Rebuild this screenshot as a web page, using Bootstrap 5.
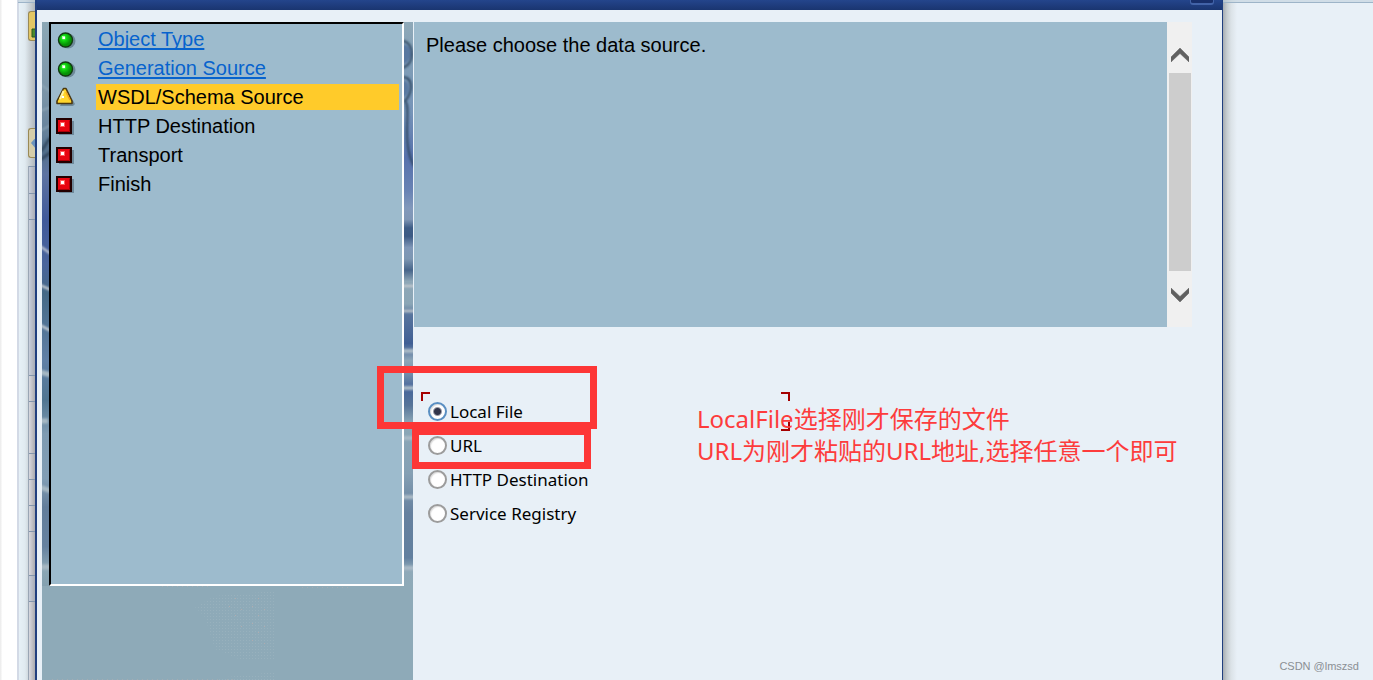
<!DOCTYPE html>
<html lang="en">
<head>
<meta charset="utf-8">
<meta name="viewport" content="width=device-width, initial-scale=1">
<title>Service wizard</title>
<link href="https://cdn.jsdelivr.net/npm/bootstrap@5.3.0/dist/css/bootstrap.min.css" rel="stylesheet">
<style>
  :root { --page: #e8f0f7; --panel: #9dbbcd; --navy: #203f7f; --mark: #fd3636; }
  body { background: var(--page); color: #000; font-family: "Liberation Sans", Arial, sans-serif; }

  /* window behind the dialog */
  .behind-left { width: 35px; background: linear-gradient(90deg, #eee 0 1px, #fff 2px 17px, #d3dae6 17px 19px, #e7f1f7 19px, #e0eaf0 25px, #cdd5da 29px, #b0b6ba 35px); }
  .tool-edge { width: 7px; }
  .tool-btn { width: 7px; height: 30px; background: #e3c765; border: 1px solid #9a8a55; border-right: 0; border-radius: 3px 0 0 3px; padding: 0; display: block; overflow: hidden; }
  .tool-btn svg { display: block; }
  .tool-btn.pale { background: #d5cdaa; }
  .grid-edge { border-left: 1px solid #9aa6b5; background: linear-gradient(90deg, #c8cfdc, #a9adb5); }
  .grid-edge > div { border-top: 1px solid #8496ac; }
  .grid-edge > .cell-light { background: linear-gradient(90deg, #d8d9e0, #aaabaf); }
  .behind-right { width: 150px; background: linear-gradient(90deg, #a7adb2, #c6cdd1 4px, #dbe2e7 8px, #e8f0f700 14px); }
  .behind-bar { height: 3px; background: #bfd0dc99; border-bottom: 1px solid #9db4c8; }
  .watermark { font-size: 11px; line-height: 16px; color: #8a8f94; padding: 0 14px 6px 0; }

  /* dialog */
  .dialog { border: solid var(--navy); border-width: 0 1px 0 2px; background: var(--page); min-width: 0; }
  .titlebar { height: 10px; background: linear-gradient(#24458c, #1a3570); padding-right: 8px; }
  .title-btn { width: 24px; height: 5px; background: #182f6b; border: solid #4263a8; border-width: 0 1px 2px; border-radius: 0 0 3px 3px; padding: 0; }
  .wizard { margin-top: 12px; margin-left: 5px; }
  .roadmap { width: 371px; background: #8eaab8; flex: none; }
  .strip-l { width: 7px; height: 564px; }
  .strip-r { width: 9px; height: 564px; }
  .steps { background: var(--panel); border: 2px solid; border-color: #000 #fff #fff #000; padding: 2px 3px 0 5px; min-height: 564px; font-size: 20px; line-height: 26px; }
  .steps li { margin-bottom: 3px; }
  .steps svg { width: 20px; height: 20px; margin: 3px 20px 0 0; flex: none; }
  .steps a { color: #0763cd; text-decoration: underline; text-decoration-thickness: 2px; text-underline-offset: 2px; text-decoration-skip-ink: none; }
  .step-name { padding-left: 2px; }
  .active-step { background: #ffcb2a; }

  /* right side */
  .message { min-height: 305px; background: var(--panel); font-size: 20px; line-height: 26px; padding: 10px 12px; margin-left: 1px; }
  .scroller { width: 25px; background: #f0f0f0; margin-right: 30px; }
  .scroller button { border: 0; background: none; padding: 0; height: 50px; display: flex; justify-content: center; align-items: center; width: 25px; }
  .scroller button + .thumb { margin: 1px 1px 0 2px; }
  .thumb { height: 198px; background: #cdcdcd; }
  .scroller button svg { width: 18px; height: 14px; }
  .scroller .up { padding-top: 16px; }
  .scroller .down { padding-bottom: 2px; }
  .choices { margin-top: 67px; padding-left: 14px; font-family: "Noto Sans", "Open Sans", sans-serif; font-size: 17px; line-height: 34px; }
  .choice { height: 34px; padding-top: 1px; }
  .choice input { appearance: none; width: 19px; height: 19px; margin: 0 3px 0 1px; border: 2px solid #9c9c9c; border-radius: 50%; background: #fff; box-shadow: inset 1px 1px 1px #ddd; flex: none; }
  .choice input:checked { border-color: #5a8fc2; background: radial-gradient(circle, #31344a 0 3px, #fff 5px); }

  /* marks drawn over the form */
  .group-frame { left: 8px; top: -2px; width: 369px; height: 39px; }
  .corner { width: 9px; height: 9px; border: 0 solid #a50000; }
  .corner-tl { border-width: 2px 0 0 2px; }
  .corner-tr { border-width: 2px 2px 0 0; }
  .corner-br { border-width: 0 2px 2px 0; }
  .mark-box { border: 7px solid var(--mark); pointer-events: none; }
  .mark-file { left: -36px; top: -28px; width: 220px; height: 63px; }
  .mark-url { left: -1px; top: 34px; width: 179px; height: 41px; }
  .note { left: 284px; top: 9px; color: #fd3c3c; font-family: "Noto Sans", "Noto Sans CJK SC", sans-serif; font-size: 24px; line-height: 32px; white-space: nowrap; }
</style>
</head>
<body>
<div class="d-flex min-vh-100">

  <aside class="behind-left d-flex flex-column align-items-end flex-shrink-0">
    <div class="behind-bar w-50"></div>
    <button class="tool-btn mt-2" type="button" aria-label="Save"><svg width="7" height="30"><path d="M3 17h4v8H3z" fill="#4c8a2c"/><path d="M3 17h4M3 17v8h4" stroke="#2d5a1c" fill="none"/></svg></button>
    <div style="height:87px"></div>
    <button class="tool-btn pale" type="button" aria-label="Back"><svg width="7" height="30"><path d="M7 8L2 14l5 6z" fill="#6c94bd"/></svg></button>
    <div class="grid-edge tool-edge flex-grow-1 mt-2">
      <div style="height:27px"></div>
      <div style="height:26px"></div>
      <div style="height:156px"></div>
      <div class="cell-light" style="height:26px"></div>
      <div class="cell-light" style="height:52px"></div>
      <div class="cell-light" style="height:26px"></div>
      <div class="cell-light" style="height:26px"></div>
      <div class="cell-light" style="height:26px"></div>
      <div class="cell-light" style="height:44px"></div>
      <div style="height:26px"></div>
      <div class="cell-light" style="height:79px"></div>
    </div>
  </aside>

  <main class="dialog flex-grow-1 d-flex flex-column">
    <header class="titlebar d-flex justify-content-end align-items-start">
      <button class="title-btn" type="button" aria-label="Close"></button>
    </header>
    <div class="wizard d-flex flex-grow-1">

      <nav class="roadmap" aria-label="Wizard steps">
        <div class="d-flex">
          <svg class="strip-l flex-shrink-0" viewBox="0 0 7 564" preserveAspectRatio="none" aria-hidden="true">
            <defs><linearGradient id="sl" x1="0" y1="0" x2="0" y2="1">
              <stop offset="0" stop-color="#8ca8b6"/><stop offset=".14" stop-color="#7892a6"/><stop offset=".2" stop-color="#64809a"/><stop offset=".23" stop-color="#54708c"/><stop offset=".27" stop-color="#5e74a2"/><stop offset=".35" stop-color="#405a9a"/><stop offset=".43" stop-color="#4a659c"/><stop offset=".48" stop-color="#456986"/><stop offset=".6" stop-color="#6080a6"/><stop offset=".67" stop-color="#507591"/><stop offset=".73" stop-color="#7e9bb2"/><stop offset=".81" stop-color="#819db4"/><stop offset=".86" stop-color="#627d9a"/><stop offset=".93" stop-color="#6682a0"/><stop offset=".97" stop-color="#8ba7b5"/><stop offset="1" stop-color="#84a1b0"/>
            </linearGradient>
            <filter id="soft" filterUnits="userSpaceOnUse" x="-4" y="0" width="18" height="564"><feGaussianBlur stdDeviation="1"/></filter></defs>
            <path fill="url(#sl)" d="M0 0h7v564H0z"/>
            <g fill="none" filter="url(#soft)">
              <path d="M-2 129C3 127 4 119 9 116M-2 138l11-8" stroke="#344b62" stroke-width="3"/>
              <path d="M-2 62l11 8M-2 89l11-4M-2 109l11-6" stroke="#a5b9c4"/>
              <path d="M-2 224l11 8M-2 263l11 5M-2 303l11 6" stroke="#d3d7da" stroke-width="2"/>
              <path d="M-2 350l11 3M-2 399H6M-2 465l11 4M-2 545H9" stroke="#a6b8c3" stroke-width="5"/>
            </g>
          </svg>
          <ul class="steps list-unstyled mb-0 flex-grow-1">
            <li class="d-flex">
              <svg viewBox="0 0 20 20" aria-hidden="true"><defs><radialGradient id="gr" cx=".38" cy=".35"><stop offset="0" stop-color="#8aff7a"/><stop offset=".4" stop-color="#12d812"/><stop offset="1" stop-color="#079007"/></radialGradient></defs><circle cx="12" cy="12" r="7.500" fill="#6e899a"/><circle cx="9.500" cy="11" r="7" fill="url(#gr)" stroke="#123a12" stroke-width="1.400"/><path d="M6 7h3v3H6z" fill="#b5ffad"/><path d="M7 8h2v2H7z" fill="#fff"/></svg>
              <span class="step-name flex-grow-1"><a href="#object">Object Type</a></span>
            </li>
            <li class="d-flex">
              <svg viewBox="0 0 20 20" aria-hidden="true"><circle cx="12" cy="12" r="7.500" fill="#6e899a"/><circle cx="9.500" cy="11" r="7" fill="url(#gr)" stroke="#123a12" stroke-width="1.400"/><path d="M6 7h3v3H6z" fill="#b5ffad"/><path d="M7 8h2v2H7z" fill="#fff"/></svg>
              <span class="step-name flex-grow-1"><a href="#generation">Generation Source</a></span>
            </li>
            <li class="d-flex" aria-current="step">
              <svg viewBox="0 0 20 20" aria-hidden="true"><path d="M11 3l8 14-2 2H4z" fill="#6e899a"/><path d="M7.500 1.500h2.500L16 14v2.500H1V14z" fill="#ffd52c" stroke="#4b3810" stroke-width="1.600" stroke-linejoin="round"/><path d="M7.500 4L4 12" stroke="#fff3a0" stroke-width="2"/><path d="M10 5l4 8" stroke="#f3a51c" stroke-width="1.500"/><path d="M6 9h2v2H6z" fill="#fff"/></svg>
              <span class="step-name active-step flex-grow-1">WSDL/Schema Source</span>
            </li>
            <li class="d-flex">
              <svg viewBox="0 0 20 20" aria-hidden="true"><path d="M3 5h15v14H3z" fill="#6e899a"/><path d="M1 3h14v14H1z" fill="#e80410" stroke="#200" stroke-width="2"/><path d="M13.500 4.500v11H2.500" stroke="#a80008" fill="none"/><path d="M4 6h5v5H4z" fill="#ff5a5a"/><path d="M5 7h3v3H5z" fill="#fff"/></svg>
              <span class="step-name flex-grow-1">HTTP Destination</span>
            </li>
            <li class="d-flex">
              <svg viewBox="0 0 20 20" aria-hidden="true"><path d="M3 5h15v14H3z" fill="#6e899a"/><path d="M1 3h14v14H1z" fill="#e80410" stroke="#200" stroke-width="2"/><path d="M13.500 4.500v11H2.500" stroke="#a80008" fill="none"/><path d="M4 6h5v5H4z" fill="#ff5a5a"/><path d="M5 7h3v3H5z" fill="#fff"/></svg>
              <span class="step-name flex-grow-1">Transport</span>
            </li>
            <li class="d-flex">
              <svg viewBox="0 0 20 20" aria-hidden="true"><path d="M3 5h15v14H3z" fill="#6e899a"/><path d="M1 3h14v14H1z" fill="#e80410" stroke="#200" stroke-width="2"/><path d="M13.500 4.500v11H2.500" stroke="#a80008" fill="none"/><path d="M4 6h5v5H4z" fill="#ff5a5a"/><path d="M5 7h3v3H5z" fill="#fff"/></svg>
              <span class="step-name flex-grow-1">Finish</span>
            </li>
          </ul>
          <svg class="strip-r flex-shrink-0" viewBox="0 0 9 564" preserveAspectRatio="none" aria-hidden="true">
            <defs><linearGradient id="sr" x1="0" y1="0" x2="0" y2="1">
              <stop offset="0" stop-color="#8fa9b8"/><stop offset=".1" stop-color="#7c9ab6"/><stop offset=".16" stop-color="#7694b8"/><stop offset=".24" stop-color="#5671ab"/><stop offset=".3" stop-color="#6983b4"/><stop offset=".33" stop-color="#8299bb"/><stop offset=".35" stop-color="#7f96b5"/><stop offset=".365" stop-color="#3e5d86"/><stop offset=".38" stop-color="#3c5a84"/><stop offset=".4" stop-color="#8098b8"/><stop offset=".42" stop-color="#7d97b2"/><stop offset=".44" stop-color="#47658a"/><stop offset=".46" stop-color="#8ea7b7"/><stop offset=".5" stop-color="#8ba6b6"/><stop offset=".52" stop-color="#57749d"/><stop offset=".57" stop-color="#405f94"/><stop offset=".6" stop-color="#8ea7b9"/><stop offset=".62" stop-color="#7994ae"/><stop offset=".65" stop-color="#46659a"/><stop offset=".68" stop-color="#577599"/><stop offset=".71" stop-color="#8ba7b7"/><stop offset=".8" stop-color="#85a0b4"/><stop offset=".87" stop-color="#66819f"/><stop offset=".95" stop-color="#62809f"/><stop offset=".97" stop-color="#8fa9b9"/><stop offset="1" stop-color="#8eaab8"/>
            </linearGradient></defs>
            <path fill="url(#sr)" d="M0 0h9v564H0z"/>
            <g fill="none" filter="url(#soft)">
              <path d="M-2 24c6-2 8 4 8 8s-3 9-8 9M-2 60c5-1 6 3 6 6s-1 7-6 8" fill="#5878a0" stroke="#5878a0" stroke-width="2"/>
              <path d="M-2 19C5 19 8 26 8 32s-3 12-10 14M-2 55c7 0 9 5 9 10s-3 11-6 14c4 3 2 18 2 30s2 28 8 36" stroke="#2d4661" stroke-width="2"/>
              <path d="M-2 264h13M-2 289h13" stroke="#c8ccd0" stroke-width="2"/>
              <path d="M-2 329h13M-2 366h13M-2 416h13M-2 475h13M-2 546h13" stroke="#a9b9c6" stroke-width="4"/>
            </g>
          </svg>
        </div>
        <svg class="d-block" width="371" height="94" aria-hidden="true">
          <defs><pattern id="dots" width="6" height="6" patternUnits="userSpaceOnUse"><path d="M0 0h1v1H0zM3 3h1v1H3zM3 0h1v1H3zM0 3h1v1H0z" fill="#98b1bd"/></pattern>
          <pattern id="grain" width="23" height="17" patternUnits="userSpaceOnUse"><path d="M3 3h1v1H3zM15 6h1v1h-1zM9 12h1v1H9z" fill="#b0acaf"/></pattern></defs>
          <path d="M153 21l20-11 60-5v68h-36l-24-10-10-32z" fill="url(#dots)"/>
          <path d="M175 10l58-3v55h-30z" fill="url(#grain)"/>
          <path d="M10 93.500h190M120 0.500h50M260 1.500h50" stroke="#a4acb2" stroke-dasharray="1 4"/>
          <path d="M175 92l58-6v8h-58z" fill="url(#dots)"/>
        </svg>
      </nav>

      <section class="flex-grow-1">
        <div class="d-flex">
          <div class="message flex-grow-1">Please choose the data source.</div>
          <div class="scroller flex-shrink-0 d-flex flex-column">
            <button class="up" type="button" aria-label="Scroll up"><svg viewBox="0 0 18 14"><path d="M0 9l9-9 9 9v5L9 5.500 0 14z" fill="#606060" stroke="#606060" stroke-width=".5"/></svg></button>
            <div class="thumb"></div>
            <button class="down" type="button" aria-label="Scroll down"><svg viewBox="0 0 18 14"><path d="M0 5l9 9 9-9V0L9 8.500 0 0z" fill="#606060" stroke="#606060" stroke-width=".5"/></svg></button>
          </div>
        </div>

        <form class="choices position-relative">
          <div class="choice d-flex align-items-center"><input type="radio" name="source" id="file" checked><label for="file">Local File</label></div>
          <div class="choice d-flex align-items-center"><input type="radio" name="source" id="url"><label for="url">URL</label></div>
          <div class="choice d-flex align-items-center"><input type="radio" name="source" id="http"><label for="http">HTTP Destination</label></div>
          <div class="choice d-flex align-items-center"><input type="radio" name="source" id="registry"><label for="registry">Service Registry</label></div>
          <div class="group-frame position-absolute pe-none">
            <span class="corner corner-tl position-absolute top-0 start-0"></span>
            <span class="corner corner-tr position-absolute top-0 end-0"></span>
            <span class="corner corner-br position-absolute bottom-0 end-0"></span>
          </div>
          <div class="mark-box mark-file position-absolute"></div>
          <div class="mark-box mark-url position-absolute"></div>
          <div class="note position-absolute" lang="zh-CN">LocalFile选择刚才保存的文件<br>URL为刚才粘贴的URL地址,选择任意一个即可</div>
        </form>
      </section>
    </div>
  </main>

  <aside class="behind-right d-flex flex-column justify-content-between flex-shrink-0">
    <div class="behind-bar"></div>
    <div class="watermark text-end">CSDN @lmszsd</div>
  </aside>
</div>
<script src="https://cdn.jsdelivr.net/npm/bootstrap@5.3.0/dist/js/bootstrap.bundle.min.js"></script>
</body>
</html>
